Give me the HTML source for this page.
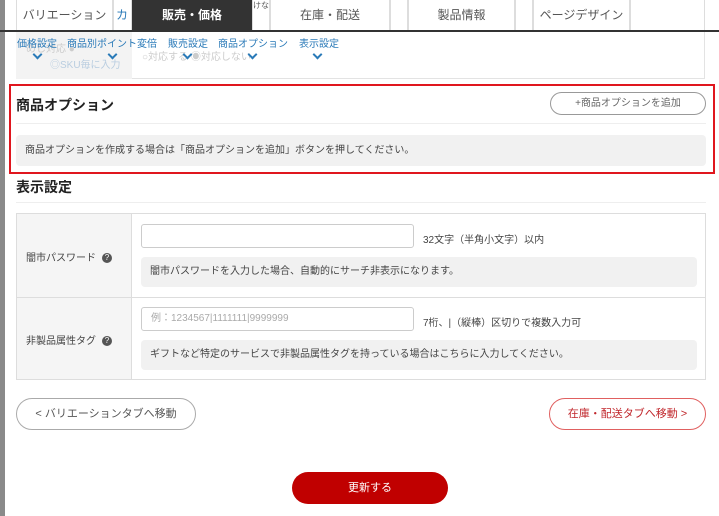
<!DOCTYPE html>
<html><head><meta charset="utf-8"><style>
*{box-sizing:border-box;margin:0;padding:0}
body{width:719px;height:516px;background:#fff;position:relative;overflow:hidden;font-family:"Liberation Sans","Noto Sans CJK JP",sans-serif;color:#333}
.a{position:absolute}
.t{position:absolute;top:0;height:31px;border:1px solid #ddd;border-top:none;font-size:12px;line-height:30px;text-align:center;color:#555;background:#fff}
.lnk{position:absolute;top:35px;font-size:10px;color:#2a7ab8}
.chev{position:absolute;top:51px;width:7px;height:7px;border-right:2px solid #2a7ab8;border-bottom:2px solid #2a7ab8;transform:rotate(45deg)}
.note{position:absolute;background:#f1f1f1;border-radius:4px;font-size:10px;color:#444;padding-left:9px}
.inp{position:absolute;border:1px solid #ccc;border-radius:3px;background:#fff;font-size:10px;color:#aaa;padding-left:9px;line-height:22px}
.q{display:inline-block;width:10px;height:10px;border-radius:50%;background:#555;color:#fff;font-size:8px;line-height:10px;text-align:center;margin-left:6px;vertical-align:middle}
.pill{position:absolute;border-radius:16px;background:#fff;text-align:center;font-size:11px}
</style></head><body>
<div class="a" style="left:0;top:0;width:5px;height:516px;background:#8a8a8a"></div>
<div class="t" style="left:16px;width:97px">バリエーション</div>
<div class="t" style="left:113px;width:19px;color:#2a7ab8;text-align:left;padding-left:2px">カ</div>
<div class="t" style="left:132px;width:120px;background:#333;color:#fff;border-color:#333;font-weight:bold">販売・価格</div>
<div class="t" style="left:252px;width:18px;font-size:8px;line-height:12px;text-align:left">けな</div>
<div class="t" style="left:270px;width:120px">在庫・配送</div>
<div class="t" style="left:390px;width:18px"></div>
<div class="t" style="left:408px;width:107px">製品情報</div>
<div class="t" style="left:515px;width:18px"></div>
<div class="t" style="left:533px;width:97px">ページデザイン</div>
<div class="t" style="left:630px;width:75px"></div>
<div class="a" style="left:0;top:30px;width:719px;height:2px;background:#333"></div>
<div class="a" style="left:16px;top:32px;width:689px;height:47px;border:1px solid #e3e3e3;border-top:none"></div>
<div class="a" style="left:16px;top:32px;width:116px;height:47px;background:#f3f3f3"></div>
<div class="a" style="left:26px;top:40px;font-size:10px;color:#ccc">めし対応 ●</div>
<div class="a" style="left:50px;top:56px;font-size:10px;color:#b9cde0">◎SKU毎に入力</div>
<div class="a" style="left:142px;top:48px;font-size:10px;color:#ccc">○対応する ◉対応しない</div>
<div class="lnk" style="left:17px">価格設定</div>
<div class="lnk" style="left:67px">商品別ポイント変倍</div>
<div class="lnk" style="left:168px">販売設定</div>
<div class="lnk" style="left:218px">商品オプション</div>
<div class="lnk" style="left:299px">表示設定</div>
<div class="chev" style="left:34px"></div>
<div class="chev" style="left:109px"></div>
<div class="chev" style="left:184px"></div>
<div class="chev" style="left:249px"></div>
<div class="chev" style="left:314px"></div>
<div class="a" style="left:9px;top:84px;width:706px;height:90px;border:2px solid #e0161e"></div>
<div class="a" style="left:16px;top:95px;font-size:14px;font-weight:bold;color:#222">商品オプション</div>
<div class="pill" style="left:550px;top:92px;width:156px;height:23px;border:1px solid #999;line-height:21px;color:#666;font-size:10px">+商品オプションを追加</div>
<div class="a" style="left:16px;top:123px;width:690px;height:1px;background:#eee"></div>
<div class="note" style="left:16px;top:135px;width:690px;height:31px;line-height:31px">商品オプションを作成する場合は「商品オプションを追加」ボタンを押してください。</div>
<div class="a" style="left:16px;top:177px;font-size:14px;font-weight:bold;color:#222">表示設定</div>
<div class="a" style="left:16px;top:202px;width:690px;height:1px;background:#eee"></div>
<div class="a" style="left:16px;top:213px;width:690px;height:167px;border:1px solid #ddd"></div>
<div class="a" style="left:17px;top:214px;width:115px;height:165px;background:#f5f5f5;border-right:1px solid #ddd"></div>
<div class="a" style="left:17px;top:297px;width:688px;height:1px;background:#ddd"></div>
<div class="a" style="left:26px;top:249px;font-size:10px;color:#444">闇市パスワード<span class="q">?</span></div>
<div class="a" style="left:26px;top:332px;font-size:10px;color:#444">非製品属性タグ<span class="q">?</span></div>
<div class="inp" style="left:141px;top:224px;width:273px;height:24px"></div>
<div class="a" style="left:423px;top:231px;font-size:10px;color:#444">32文字（半角小文字）以内</div>
<div class="note" style="left:141px;top:257px;width:556px;height:30px;line-height:30px">闇市パスワードを入力した場合、自動的にサーチ非表示になります。</div>
<div class="inp" style="left:141px;top:307px;width:273px;height:24px">例：1234567|1111111|9999999</div>
<div class="a" style="left:423px;top:314px;font-size:10px;color:#444">7桁、|（縦棒）区切りで複数入力可</div>
<div class="note" style="left:141px;top:340px;width:556px;height:30px;line-height:30px">ギフトなど特定のサービスで非製品属性タグを持っている場合はこちらに入力してください。</div>
<div class="pill" style="left:16px;top:398px;width:180px;height:32px;border:1px solid #aaa;line-height:30px;color:#555">&lt; バリエーションタブへ移動</div>
<div class="pill" style="left:549px;top:398px;width:157px;height:32px;border:1px solid #e06060;line-height:30px;color:#c0262b">在庫・配送タブへ移動 &gt;</div>
<div class="pill" style="left:292px;top:472px;width:156px;height:32px;background:#c00000;line-height:32px;color:#fff">更新する</div>
</body></html>
